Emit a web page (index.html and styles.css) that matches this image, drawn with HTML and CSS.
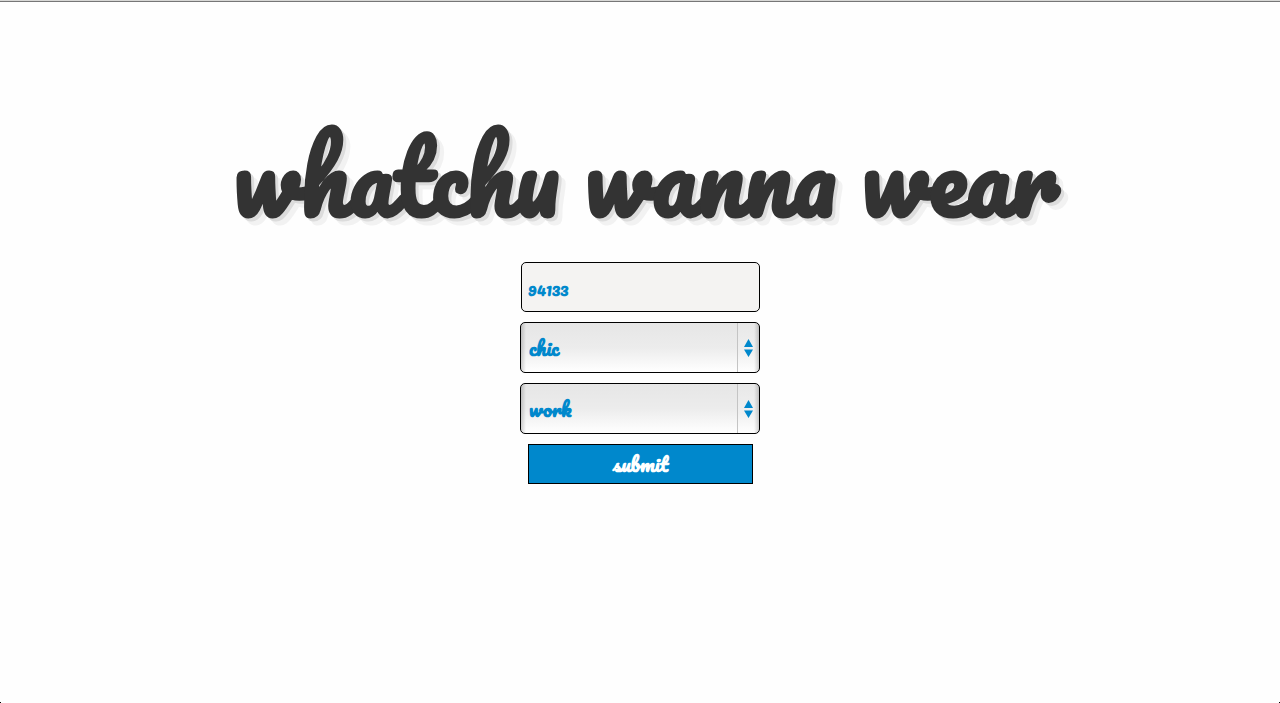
FILE: index.html
```html
<!DOCTYPE html>
<html lang="en">
<head>
  <meta charset="utf-8">
  <meta name="viewport" content="width=device-width, initial-scale=1">
  <title>whatchu wanna wear</title>
  <link rel="stylesheet" href="styles.css">
</head>
<body>
  <main class="page">
    <h1 class="title">whatchu wanna wear</h1>
    <form class="form">
      <input class="field zip" type="text" value="94133" aria-label="Zip code">
      <div class="picker">
        <select class="field select" aria-label="Style">
          <option>chic</option>
        </select>
        <svg class="arrows" viewBox="0 0 9 18" aria-hidden="true"><path d="M4.500 0 9 8H0zM0 10.500h9L4.500 18z"/></svg>
      </div>
      <div class="picker">
        <select class="field select" aria-label="Occasion">
          <option>work</option>
        </select>
        <svg class="arrows" viewBox="0 0 9 18" aria-hidden="true"><path d="M4.500 0 9 8H0zM0 10.500h9L4.500 18z"/></svg>
      </div>
      <button class="submit" type="submit">submit</button>
    </form>
  </main>
</body>
</html>
```

FILE: styles.css
```css
* {
  box-sizing: border-box;
}

body {
  margin: 0;
  min-height: 100vh;
  border-top: 1px solid #d8d8d6;
  background:
    linear-gradient(#000, #000) left bottom / 1px 1px no-repeat,
    linear-gradient(#000, #000) right bottom / 1px 1px no-repeat,
    #fefefe;
  font-family: Pacifico, Lato, sans-serif;
}

.page {
  display: flex;
  flex-direction: column;
  align-items: center;
  padding-top: 99px;
  border-top: 1px solid #777;
}

.title {
  margin: 0 0 11px;
  padding-left: 12px;
  color: #333;
  font-size: 96px;
  font-weight: 700;
  line-height: 150px;
  text-align: center;
  text-shadow: 3px 3px 0 #dcdcdc, 7px 7px 0 #f2f2f2;
}

.form {
  display: flex;
  flex-direction: column;
  gap: 10px;
  width: 240px;
}

.field {
  border: 1px solid #000;
  border-radius: 5px;
  color: #0088cc;
  font-family: inherit;
  font-weight: 700;
}

.zip {
  height: 50px;
  margin-left: 1px;
  padding: 4px 6px 0;
  background: #f4f3f2;
  font-size: 16px;
}

.picker {
  display: grid;
  align-items: center;
}

.select {
  grid-area: 1 / 1;
  width: 100%;
  height: 51px;
  padding: 0 28px 0 8px;
  appearance: none;
  background:
    linear-gradient(to right, rgb(0 0 0 / 18%), transparent) left top / 5px 100% no-repeat,
    linear-gradient(to left, rgb(0 0 0 / 18%), transparent) right top / 5px 100% no-repeat,
    linear-gradient(#c4c4c4, #c4c4c4) right 21px top / 1px 100% no-repeat,
    linear-gradient(#e8e8e8, #f0f0f0 60%, #fff) right top / 21px 100% no-repeat,
    linear-gradient(#e6e6e6, #ececec 50%, #fff);
  font-size: 20px;
}

.arrows {
  grid-area: 1 / 1;
  justify-self: end;
  width: 9px;
  height: 18px;
  margin-right: 7px;
  fill: #0088cc;
  pointer-events: none;
}

.submit {
  height: 40px;
  margin: 0 7px 0 8px;
  padding: 0 0 2px;
  border: 1px solid #000;
  background: #0088cc;
  color: #fff;
  font-family: inherit;
  font-size: 20px;
  font-weight: 700;
}
```
